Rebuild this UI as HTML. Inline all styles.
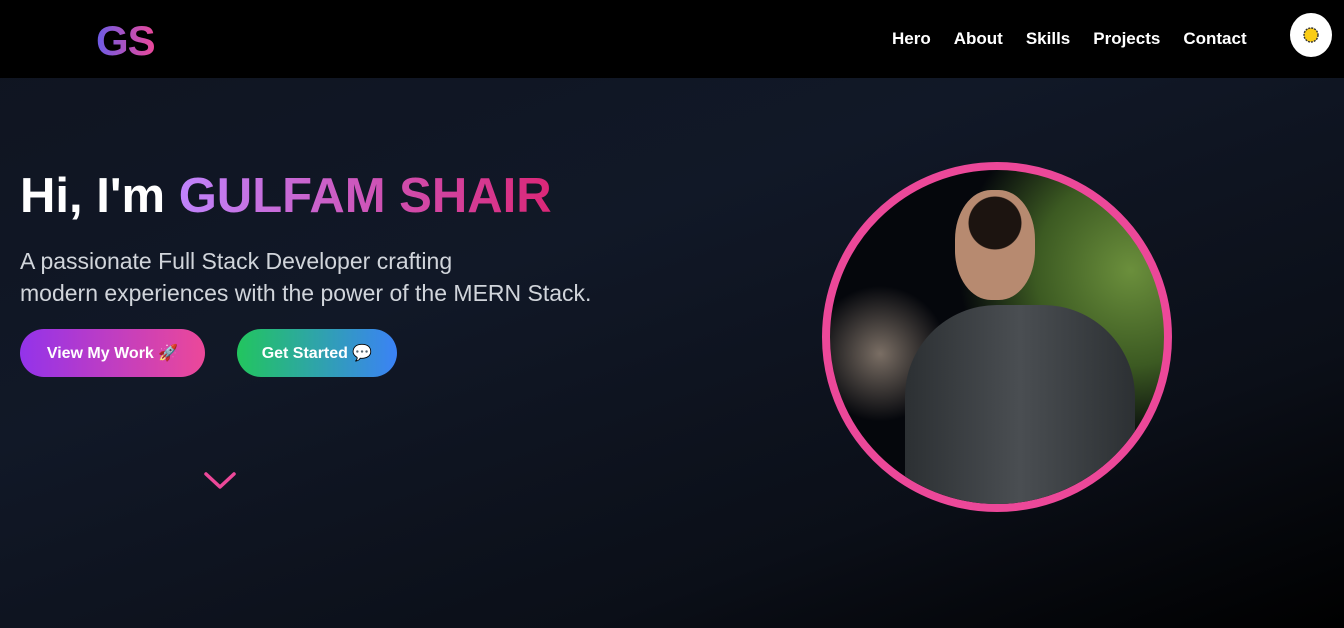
<!DOCTYPE html>
<html><head><meta charset="utf-8"><style>
*{margin:0;padding:0;box-sizing:border-box}
html,body{width:1344px;height:628px;overflow:hidden}
body{font-family:"Liberation Sans",sans-serif;background:linear-gradient(160deg,#0f1420 0%,#111827 40%,#0b0f18 75%,#000 100%);position:relative}
header{position:absolute;left:0;top:0;width:1344px;height:78px;background:#000}
.logo{position:absolute;left:96px;top:17px;font-size:42px;font-weight:bold;letter-spacing:-1px;background:linear-gradient(90deg,#6b5ce7,#ec4899);-webkit-background-clip:text;color:transparent}
nav{position:absolute;top:29px;left:892px;display:flex;gap:23px;font-size:17px;font-weight:bold;color:#fff}
.theme{position:absolute;left:1290px;top:13px;width:42px;height:44px;border-radius:50%;background:#fff;display:flex;align-items:center;justify-content:center}
h1{position:absolute;left:20px;top:168px;font-size:49px;font-weight:bold;color:#fff;white-space:nowrap}
h1 span{background:linear-gradient(90deg,#c084fc,#db2777);-webkit-background-clip:text;color:transparent}
p.sub{position:absolute;left:20px;top:245px;font-size:23px;line-height:32px;color:#d1d5db;white-space:nowrap}
.btn{position:absolute;top:329px;height:48px;border-radius:24px;color:#fff;font-weight:bold;font-size:16px;display:flex;align-items:center;justify-content:center}
.b1{left:20px;width:185px;background:linear-gradient(90deg,#9333ea,#ec4899)}
.b2{left:237px;width:160px;background:linear-gradient(90deg,#22c55e,#3b82f6)}
.photo{position:absolute;left:822px;top:162px;width:350px;height:350px;border-radius:50%;border:8px solid #ec4899;overflow:hidden;background:radial-gradient(circle at 90% 30%,#6b8f3c 0,#3c5a22 25%,transparent 45%),radial-gradient(circle at 15% 55%,#7a6e64 0,transparent 20%),#05070c}
.body{position:absolute;left:75px;top:135px;width:230px;height:230px;border-radius:40% 40% 0 0;background:linear-gradient(90deg,#2c3033,#4a4e52 50%,#2c3033)}
.head{position:absolute;left:125px;top:20px;width:80px;height:110px;border-radius:45%;background:radial-gradient(circle at 50% 30%,#1c1410 0 30%,transparent 31%),#b78a70}
</style></head><body>
<header><div class="logo">GS</div>
<nav><span>Hero</span><span>About</span><span>Skills</span><span>Projects</span><span>Contact</span></nav>
<div class="theme"><svg width="22" height="22" viewBox="0 0 22 22"><circle cx="11" cy="11" r="7" fill="#facc15" stroke="#333" stroke-width="1.4" stroke-dasharray="2 1"/></svg></div>
</header>
<h1>Hi, I'm <span>GULFAM SHAIR</span></h1>
<p class="sub">A passionate Full Stack Developer crafting<br>modern experiences with the power of the MERN Stack.</p>
<div class="btn b1">View My Work 🚀</div>
<div class="btn b2">Get Started 💬</div>
<svg style="position:absolute;left:203px;top:470px" width="34" height="22" viewBox="0 0 34 22"><path d="M3 4 L17 17 L31 4" fill="none" stroke="#ec4899" stroke-width="3.5" stroke-linecap="round" stroke-linejoin="round"/></svg>
<div class="photo"><div class="body"></div><div class="head"></div></div>
</body></html>
